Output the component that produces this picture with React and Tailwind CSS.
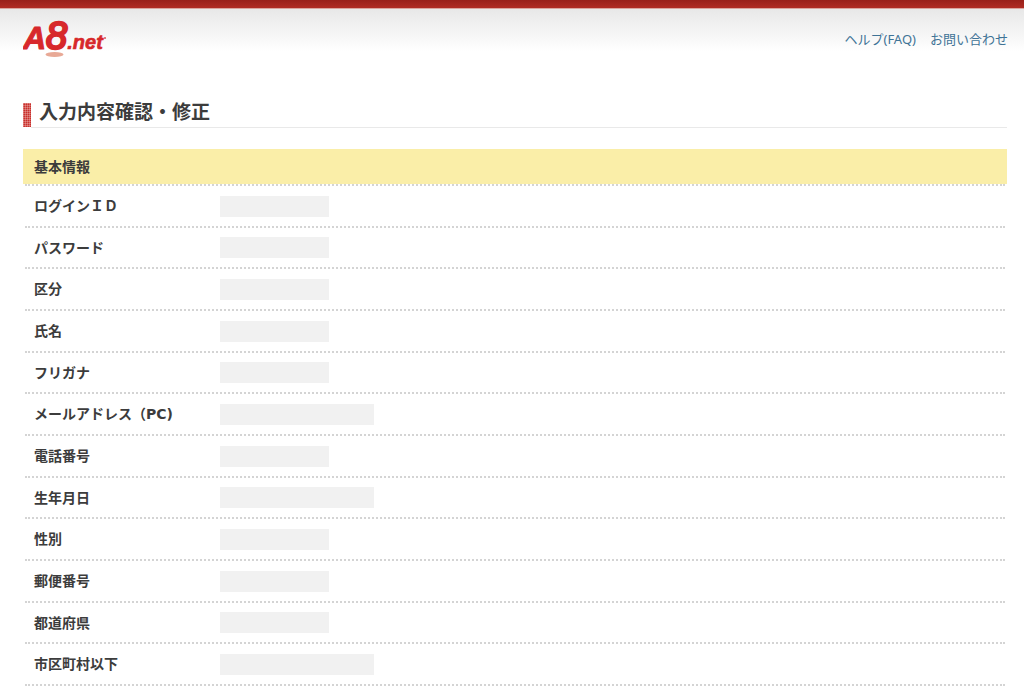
import React from 'react';

const fields = [
    { label: 'ログインＩＤ', wide: false },
    { label: 'パスワード', wide: false },
    { label: '区分', wide: false },
    { label: '氏名', wide: false },
    { label: 'フリガナ', wide: false },
    { label: 'メールアドレス（PC)', wide: true },
    { label: '電話番号', wide: false },
    { label: '生年月日', wide: true },
    { label: '性別', wide: false },
    { label: '郵便番号', wide: false },
    { label: '都道府県', wide: false },
    { label: '市区町村以下', wide: true },
];

const Logo = () => (
    <svg width="86" height="52" viewBox="0 -10 86 52" role="img" aria-label="A8.net">
        <ellipse cx="31.5" cy="35.5" rx="9" ry="2.5" fill="#e8a996" />
        <g fill="#d7282b" stroke="#d7282b" strokeLinejoin="round" fontFamily="'Liberation Sans', Arial, sans-serif" fontStyle="italic">
            <text x="0" y="30" fontSize="32" fontWeight="bold" strokeWidth="1">
                A<tspan fontSize="38" fontWeight="normal" strokeWidth="2.4">8</tspan><tspan fontSize="20" strokeWidth="0.6">.net</tspan>
            </text>
            <circle cx="82" cy="19" r="0.7" strokeWidth="0.4" />
        </g>
    </svg>
);

const Header = () => (
    <header>
        <div className="h-[9px] border-b border-[#d9a5a0] bg-linear-to-b from-[#98201a] to-[#b02c24]" />
        <div className="flex h-[61px] items-start justify-between bg-linear-to-b from-[#e8e8e8] to-white to-70% pl-[23px] pr-4">
            <a href="#top">
                <Logo />
            </a>
            <nav className="flex gap-[14px] pt-5 text-[13px] leading-5 text-[#3f7396]">
                <a href="#faq">ヘルプ(FAQ)</a>
                <a href="#contact">お問い合わせ</a>
            </nav>
        </div>
    </header>
);

const FieldRow = ({ label, wide }) => (
    <tr className="flex h-[42px] items-center border-b-2 border-dotted border-[#d4d4d4] nth-[3n+2]:h-[41px]">
        <th scope="row" className="w-[195px] pl-[9px] text-left font-bold">{label}</th>
        <td>
            <div className={wide ? 'h-[21px] w-[154px] bg-[#f1f1f1]' : 'h-[21px] w-[109px] bg-[#f1f1f1]'} />
        </td>
    </tr>
);

const App = () => {
    return (
        <div className="bg-white font-['Noto_Sans','Noto_Sans_CJK_JP',sans-serif] text-[#3c3c3c]">
            <Header />
            <main className="pl-[23px] pr-[17px] pt-[30px]">
                <div className="flex items-end">
                    <span className="mb-px h-6 w-2 bg-[#c9302c] bg-[linear-gradient(#ffffff3d_1px,transparent_1px),linear-gradient(90deg,#ffffff3d_1px,transparent_1px)] bg-size-[2px_2px]" />
                    <h1 className="h-7 flex-1 border-b border-[#e9e9e9] pl-2 text-[19px] leading-6 font-bold">入力内容確認・修正</h1>
                </div>
                <section className="mt-[21px]">
                    <h2 className="bg-[#faeea8] py-2 pl-[11px] text-[14px] leading-[19px] font-bold">基本情報</h2>
                    <table className="mx-0.5 block border-t-2 border-dotted border-[#d4d4d4] font-['DejaVu_Sans','Noto_Sans_CJK_JP',sans-serif] text-[14px] leading-5">
                        <tbody className="block">
                            {fields.map((field) => (
                                <FieldRow key={field.label} label={field.label} wide={field.wide} />
                            ))}
                        </tbody>
                    </table>
                </section>
            </main>
        </div>
    );
};

export default App;
